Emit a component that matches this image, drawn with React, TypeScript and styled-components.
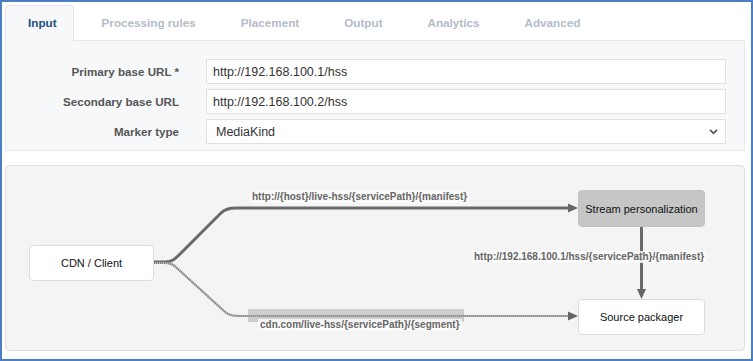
import styled, { createGlobalStyle } from 'styled-components'

const GlobalStyle = createGlobalStyle`
  html, body {
    margin: 0;
    padding: 0;
    background: #fff;
    font-family: "Liberation Sans", Arial, sans-serif;
  }
  * {
    box-sizing: border-box;
  }
`

const tabs = ['Input', 'Processing rules', 'Placement', 'Output', 'Analytics', 'Advanced']

const fields = [
  { label: 'Primary base URL *', value: 'http://192.168.100.1/hss' },
  { label: 'Secondary base URL', value: 'http://192.168.100.2/hss' },
]

const segmentPath =
  'M154,264 L165,264 C172,264 175,267 179,271 L224,312 C228,316 232,317 240,317 L570,317'

export default function App() {
  return (
    <>
      <GlobalStyle />
      <Frame>
        <TabBar>
          {tabs.map((t, i) => (
            <Tab key={t} $active={i === 0}>
              {t}
            </Tab>
          ))}
        </TabBar>

        <FormPanel>
          {fields.map((f) => (
            <Row key={f.label}>
              <Label>{f.label}</Label>
              <TextInput defaultValue={f.value} />
            </Row>
          ))}
          <Row>
            <Label>Marker type</Label>
            <SelectWrap>
              <Select defaultValue="MediaKind">
                <option>MediaKind</option>
              </Select>
              <Chevron viewBox="0 0 10 7">
                <polyline points="1,1 5,5 9,1" fill="none" stroke="#555" strokeWidth="2" />
              </Chevron>
            </SelectWrap>
          </Row>
        </FormPanel>

        <Diagram>
          <Edges viewBox="6 167 739 184">
            {/* manifest request */}
            <path
              d="M154,263 L165,263 C172,263 175,260 179,256 L221,214 C225,210 229,209 236,209 L570,209"
              fill="none"
              stroke="#6a6a6a"
              strokeWidth="3"
            />
            <polygon points="568,204.5 578,209 568,213.5" fill="#666" />

            {/* segment request */}
            <rect x="248" y="310" width="216" height="13" fill="#cdcdcd" />
            <path d={segmentPath} fill="none" stroke="#c2c2c2" strokeWidth="2.2" />
            <path
              d={segmentPath}
              fill="none"
              stroke="#7a7a7a"
              strokeWidth="2.2"
              strokeDasharray="1 1"
            />
            <polygon points="568,312.5 578,317 568,321.5" fill="#666" />

            {/* personalization -> packager */}
            <line x1="641.5" y1="228" x2="641.5" y2="292" stroke="#6a6a6a" strokeWidth="3" />
            <polygon points="637,290 646,290 641.5,300" fill="#666" />
          </Edges>

          <Node $x={23} $y={79} $w={125} $h={36}>
            CDN / Client
          </Node>
          <Node $x={572} $y={24} $w={127} $h={37} $shade>
            Stream personalization
          </Node>
          <Node $x={572} $y={133} $w={127} $h={36}>
            Source packager
          </Node>

          <EdgeLabel $x={244} $y={25}>
            http://{'{host}'}/live-hss/{'{servicePath}'}/{'{manifest}'}
          </EdgeLabel>
          <EdgeLabel $x={466} $y={85}>
            http://192.168.100.1/hss/{'{servicePath}'}/{'{manifest}'}
          </EdgeLabel>
          <EdgeLabel $x={252} $y={153}>
            cdn.com/live-hss/{'{servicePath}'}/{'{segment}'}
          </EdgeLabel>
        </Diagram>
      </Frame>
    </>
  )
}

const Frame = styled.div`
  width: 753px;
  height: 361px;
  border: 2px solid #4d7ebf;
  padding: 3px 6px 0 3px;
  background: #fff;
  overflow: hidden;
`

const TabBar = styled.div`
  display: flex;
  height: 36px;
  position: relative;
  z-index: 1;
`

const Tab = styled.div<{ $active?: boolean }>`
  height: 36px;
  line-height: 34px;
  padding: 0 16px 0 22px;
  margin-right: 5px;
  border: 1px solid ${(p) => (p.$active ? '#e4e6e9' : 'transparent')};
  border-bottom: none;
  border-radius: 4px 4px 0 0;
  background: ${(p) => (p.$active ? '#f7f8fa' : 'transparent')};
  color: ${(p) => (p.$active ? '#1c4f7d' : '#b3bcc8')};
  font-size: 11.7px;
  font-weight: bold;
  white-space: nowrap;
  cursor: pointer;
`

const FormPanel = styled.div`
  margin-top: -1px;
  background: #f7f8fa;
  border: 1px solid #e6e8eb;
  padding: 18px 18px 6px 0;
  display: flex;
  flex-direction: column;
  gap: 5px;
`

const Row = styled.div`
  display: grid;
  grid-template-columns: 173px 1fr;
  column-gap: 27px;
  align-items: center;
`

const Label = styled.label`
  text-align: right;
  font-size: 11.6px;
  font-weight: bold;
  color: #555;
`

const TextInput = styled.input`
  height: 25px;
  width: 100%;
  border: 1px solid #e1e1e1;
  background: #fff;
  padding: 0 6px;
  font-family: "Liberation Sans", Arial, sans-serif;
  font-size: 12.5px;
  color: #333;
  outline: none;
`

const SelectWrap = styled.div`
  position: relative;
`

const Select = styled.select`
  appearance: none;
  height: 25px;
  width: 100%;
  border: 1px solid #e1e1e1;
  border-radius: 0;
  background: #fff;
  padding: 0 9px;
  font-family: "Liberation Sans", Arial, sans-serif;
  font-size: 12.5px;
  color: #333;
  outline: none;
`

const Chevron = styled.svg`
  position: absolute;
  right: 8px;
  top: 10px;
  width: 9px;
  height: 6px;
  pointer-events: none;
`

const Diagram = styled.div`
  position: relative;
  margin-top: 14px;
  height: 186px;
  background: #f4f4f4;
  border: 1px solid #dfdfdf;
  border-radius: 4px;
`

const Edges = styled.svg`
  position: absolute;
  left: 0;
  top: 0;
  width: 739px;
  height: 184px;
`

const Node = styled.div<{ $x: number; $y: number; $w: number; $h: number; $shade?: boolean }>`
  position: absolute;
  left: ${(p) => p.$x}px;
  top: ${(p) => p.$y}px;
  width: ${(p) => p.$w}px;
  height: ${(p) => p.$h}px;
  display: flex;
  align-items: center;
  justify-content: center;
  background: ${(p) => (p.$shade ? '#c6c6c6' : '#fff')};
  border: 1px solid ${(p) => (p.$shade ? '#c2c2c2' : '#dcdcdc')};
  border-radius: 4px;
  font-size: 11px;
  color: #111;
`

const EdgeLabel = styled.span<{ $x: number; $y: number }>`
  position: absolute;
  left: ${(p) => p.$x}px;
  top: ${(p) => p.$y}px;
  padding: 0 2px;
  line-height: 12px;
  font-size: 10px;
  font-weight: bold;
  color: #666;
  background: rgba(250, 250, 250, 0.85);
  white-space: nowrap;
`
